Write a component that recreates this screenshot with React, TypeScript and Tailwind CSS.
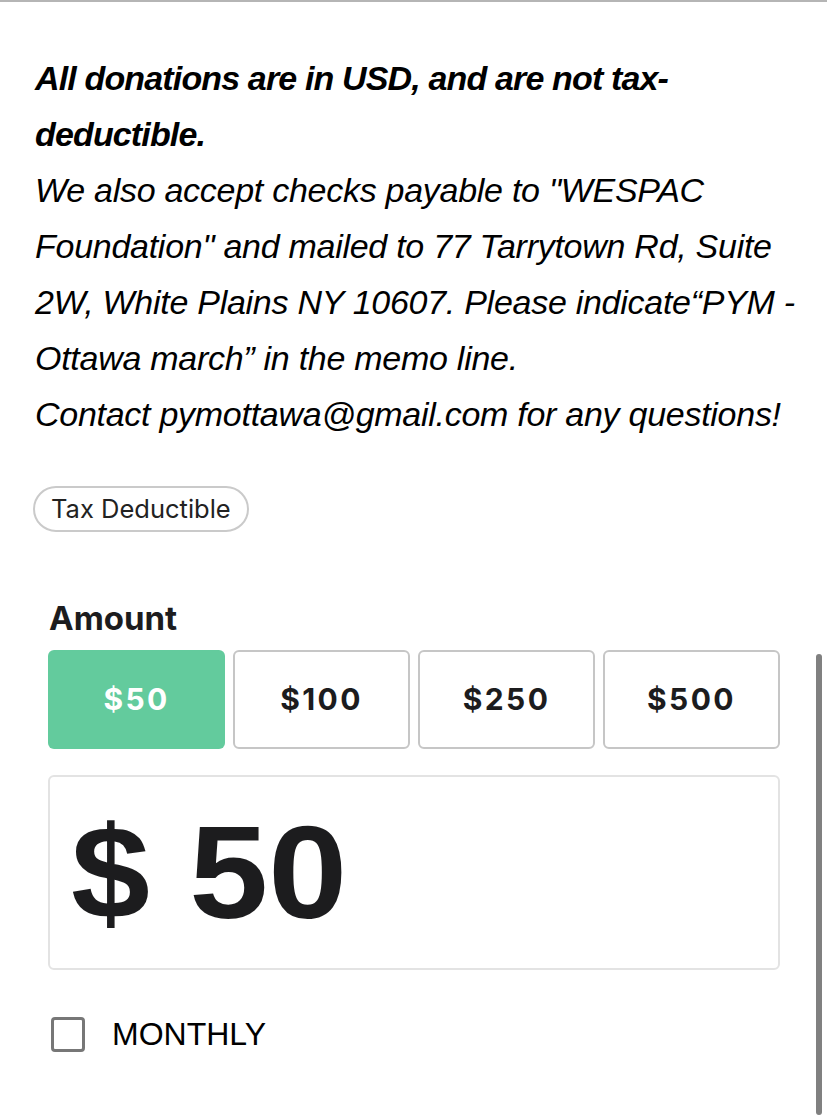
import React from "react";

export default function App() {
  const amounts = ["$50", "$100", "$250", "$500"];
  return (
    <div className="relative w-[827px] h-[1118px] overflow-hidden bg-white border-t-2 border-[#b5b5b5]">
      <div
        className="pl-[35px] pr-[26px] pt-[48px] text-[34px] leading-[56px] italic text-black"
        style={{ fontFamily: '"Liberation Sans", Arial, sans-serif' }}
      >
        <p className="font-bold tracking-[-0.025em]">All donations are in USD, and are not tax-deductible.</p>
        <p className="tracking-[-0.008em]">
          We also accept checks payable to "WESPAC Foundation" and mailed to 77 Tarrytown Rd, Suite 2W, White Plains NY 10607. Please indicate“PYM - Ottawa march” in the memo line.
        </p>
        <p className="tracking-[-0.008em]">Contact pymottawa@gmail.com for any questions!</p>
      </div>

      <div className="pl-[33px] mt-[44px]" style={{ fontFamily: 'Inter, "Liberation Sans", sans-serif' }}>
        <span className="inline-flex items-center h-[46px] px-[16px] rounded-full border-2 border-[#cacaca] text-[25.5px] text-[#222]">
          Tax Deductible
        </span>
      </div>

      <div className="pl-[48px] pr-[47px] mt-[66px]" style={{ fontFamily: 'Inter, "Liberation Sans", sans-serif' }}>
        <div className="text-[33px] leading-[40px] font-bold text-[#1c1c1e] pl-[1px]">Amount</div>
        <div className="grid grid-cols-4 gap-2 mt-[12px]">
          {amounts.map((a, i) => (
            <div
              key={a}
              className={
                i === 0
                  ? "h-[99px] rounded-[6px] bg-[#63cb9d] text-white flex items-center justify-center text-[30px] font-bold tracking-[0.08em]"
                  : "h-[99px] rounded-[6px] border-2 border-[#c6c6c6] bg-white text-[#1c1c1e] flex items-center justify-center text-[30px] font-bold tracking-[0.08em]"
              }
            >
              {a}
            </div>
          ))}
        </div>

        <div className="mt-[26px] h-[195px] rounded-[6px] border-2 border-[#e3e3e3] flex items-center pl-[21px]">
          <span
            className="inline-block origin-left scale-x-[1.075] text-[132px] leading-[132px] font-bold text-[#1c1c1e]"
            style={{ fontFamily: '"Liberation Sans", Arial, sans-serif' }}
          >
            $ 50
          </span>
        </div>

        <div className="mt-[44px] flex items-center gap-[27px] pl-[3px]">
          <div className="w-[34px] h-[35px] rounded-[4px] border-[3px] border-[#777]" />
          <span
            className="text-[32px] leading-[40px] text-black"
            style={{ fontFamily: '"Liberation Sans", Arial, sans-serif' }}
          >
            MONTHLY
          </span>
        </div>
      </div>

      <div className="absolute left-[816px] top-[652px] w-[6px] h-[461px] rounded-full bg-[#808080]" />
    </div>
  );
}
